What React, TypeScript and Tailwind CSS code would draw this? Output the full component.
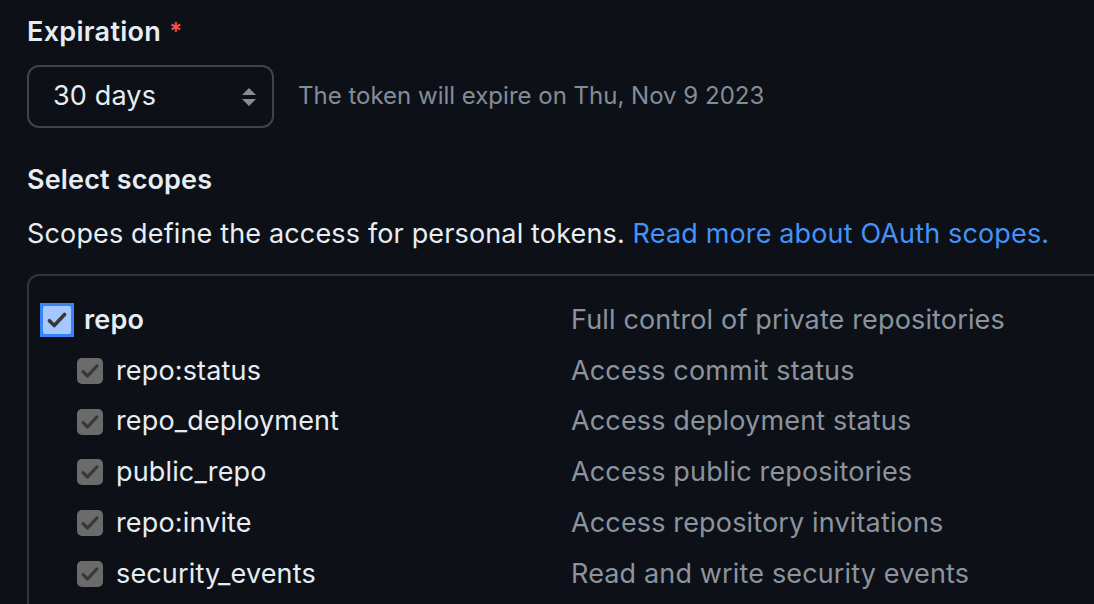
import React from "react";

function SmallCheck() {
  return (
    <div className="w-[26px] h-[26px] rounded-[5px] bg-[#6b6b6b] flex items-center justify-center shrink-0">
      <svg width="20" height="20" viewBox="0 0 16 16">
        <path d="M2.5 8.5 L6 12 L13.5 4" stroke="#383838" strokeWidth="2.6" fill="none" strokeLinecap="round" strokeLinejoin="round" />
      </svg>
    </div>
  );
}

const rows = [
  ["repo:status", "Access commit status"],
  ["repo_deployment", "Access deployment status"],
  ["public_repo", "Access public repositories"],
  ["repo:invite", "Access repository invitations"],
  ["security_events", "Read and write security events"],
];

export default function App() {
  return (
    <div
      className="w-[1094px] h-[604px] overflow-hidden bg-[#0d1117] text-[#e6edf3] pl-[27px] pt-[14px] tracking-[0.15px]"
      style={{ fontFamily: "Inter, 'Noto Sans', sans-serif" }}
    >
      <div className="flex items-center text-[27px] font-semibold leading-[36px]">
        <span className="tracking-[0.3px]">Expiration</span>
        <span className="text-[#f85149] ml-[8px] text-[24px]">*</span>
      </div>
      <div className="flex items-center mt-[15px]">
        <div className="w-[247px] h-[63px] rounded-[12px] border-2 border-[#3d444d] flex items-center justify-between pl-[24px] pr-[14px] text-[27px]">
          <span>30 days</span>
          <svg width="18" height="26" viewBox="0 0 18 26">
            <path d="M2 11 L9 4 L16 11 Z" fill="#848d97" />
            <path d="M2 15 L9 22 L16 15 Z" fill="#848d97" />
          </svg>
        </div>
        <span className="ml-[24px] text-[24px] tracking-normal text-[#848d97] -mt-[2px]">The token will expire on Thu, Nov 9 2023</span>
      </div>
      <div className="mt-[34px] text-[27px] font-semibold leading-[36px]">Select scopes</div>
      <div className="mt-[18px] text-[27px] leading-[36px]">
        Scopes define the access for personal tokens.{" "}
        <span className="text-[#4493f8]">Read more about OAuth scopes.</span>
      </div>
      <div className="mt-[22px] w-[1100px] h-[400px] border-2 border-[#30363d] rounded-tl-[12px] pt-[26px]">
        <div className="flex items-center h-[36px]">
          <div className="w-[270px] flex items-center pl-[11px]">
            <div className="w-[34px] h-[34px] bg-[#3b82f6] p-[3px] shrink-0">
              <div className="w-full h-full bg-[#a5c8ff] rounded-[2px] flex items-center justify-center">
                <svg width="22" height="22" viewBox="0 0 16 16">
                  <path d="M2.5 8.5 L6 12 L13.5 4" stroke="#383838" strokeWidth="2.6" fill="none" strokeLinecap="round" strokeLinejoin="round" />
                </svg>
              </div>
            </div>
            <span className="ml-[10px] text-[27px] font-semibold">repo</span>
          </div>
          <span className="ml-[272px] text-[27px] text-[#8b949e]">Full control of private repositories</span>
        </div>
        {rows.map(([a, b]) => (
          <div key={a} className="flex items-center h-[36px] mt-[14.8px]">
            <div className="w-[542px] flex items-center pl-[48px]">
              <SmallCheck />
              <span className="ml-[13px] text-[27px]">{a}</span>
            </div>
            <span className="text-[27px] text-[#8b949e]">{b}</span>
          </div>
        ))}
      </div>
    </div>
  );
}
